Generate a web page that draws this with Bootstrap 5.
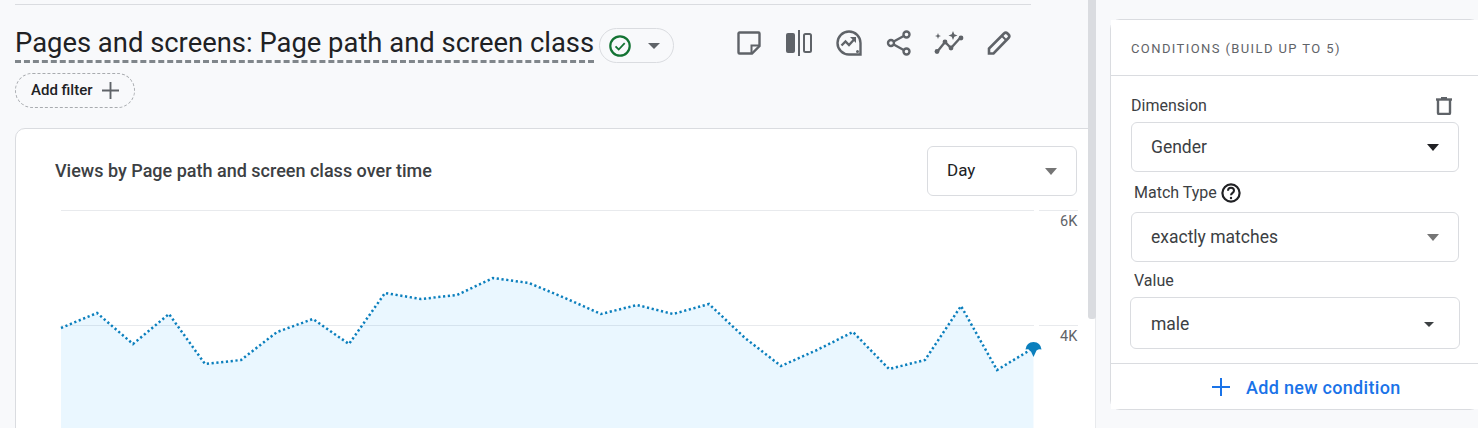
<!DOCTYPE html>
<html lang="en">
<head>
<meta charset="utf-8">
<title>Pages and screens</title>
<link href="https://cdn.jsdelivr.net/npm/bootstrap@5.3.0/dist/css/bootstrap.min.css" rel="stylesheet">
<style>
html,body{height:100%;margin:0;overflow:hidden;background:#f8f9fb;font-family:Roboto,"Liberation Sans",sans-serif;color:#3c4043}
.shell{width:1478px;height:428px;overflow:hidden}
.main-pane{width:1088px;flex:none;overflow:hidden;padding:4px 0 0 15px}
.top-rule{width:1016px;height:1px;background:#dadce0}
.title-row{height:58px;padding-top:18px}
.page-title{font-family:Roboto,sans-serif;font-size:27.4px;font-weight:400;line-height:40px;height:40px;margin:0;color:#202124;border-bottom:3px dashed #80868b;white-space:nowrap}
.status-pill{width:75px;height:35px;margin:5px 0 0 5px;border:1px solid #dadce0;border-radius:18px;padding-left:10px;gap:17px}
.status-pill svg{margin-left:-1px}
.tool-row{margin:-5px 0 0 50px}
.tool-btn{width:50px;height:50px}
.icon{fill:none;stroke:#5f6368;stroke-width:2}
.filter-pill{width:120px;height:35px;margin-top:10px;border:1px dashed #a8abaf;border-radius:18px;padding-left:15px;gap:9px;font-size:15px;font-weight:500;color:#202124}
.chart-card{width:1090px;height:340px;margin-top:20px;border:1px solid #dadce0;border-radius:10px 0 0 0;background:#fff;overflow:hidden}
.chart-head{height:67px;padding:17px 27px 0 39px}
.chart-title{font-size:18px;font-weight:500;color:#3c4043;line-height:20px;padding-top:15px}
.picker{background:#fff;border:1px solid #dadce0;border-radius:6px;font-size:17.5px;color:#3c4043;padding:0 19px}
.picker-day{width:150px;height:50px;color:#202124;font-size:17px}
.caret{width:0;height:0;border-style:solid;border-color:#757575 transparent transparent;border-width:7px 6.5px 0}
.caret-dark{border-top-color:#202124}
.caret-small{border-width:5px 5.5px 0;border-top-color:#3c4043}
.status-pill .caret-small{border-width:6px 6px 0;border-top-color:#5f6368}
.chart-svg{display:block}
.scroll-track{width:8px;flex:none;background:#fff;border-right:1px solid #e8eaed}
.scroll-thumb{height:319px;width:8px;background:#dadce0;border-radius:0 0 3px 3px}
.side-pane{flex:1;min-width:0;overflow:hidden;padding:19px 0 0 14px}
.cond-card{width:370px;height:391px;border:1px solid #dadce0;border-radius:10px;background:#fff;--bs-card-cap-bg:#fff;--bs-card-border-color:#dadce0}
.cond-head{height:56px;padding:0 20px;font-size:13px;letter-spacing:1.4px;color:#5f6368;line-height:57px;background:#fff;border-bottom:1px solid #dadce0}
.cond-body{padding:19px 0 0 20px}
.cond-row{width:328px;height:22px;margin-bottom:5px;font-size:16px;padding-right:7px}
.cond-label{font-size:16px;line-height:20px;color:#3c4043;margin-left:3px;padding-top:1px;margin-bottom:-1px}
.label-match{margin-top:10px}
.picker-cond{width:328px;height:50px}
.picker-gap{margin:10px 0 8px}
.picker-value{width:330px;height:52px;margin:7px 0 0 -1px;padding:2px 25px 0 20px}
.cond-foot{height:46px;background:#fff;border-top:1px solid #dadce0;padding:1px 0 0 101px;gap:16px;color:#1a73e8;font-size:18px;font-weight:500;letter-spacing:.3px}
.chart-text{font-family:Roboto,sans-serif;font-size:14.5px;fill:#5f6368}
</style>
</head>
<body>
<div class="shell d-flex">
  <main class="main-pane">
    <div class="top-rule"></div>
    <div class="title-row d-flex align-items-start">
      <h1 class="page-title">Pages and screens: Page path and screen class</h1>
      <div class="status-pill d-flex align-items-center">
        <svg width="22" height="22" viewBox="0 0 22 22" fill="none" stroke="#137333"><circle cx="11" cy="11" r="9.700" stroke-width="2.200"/><path d="M6.500 11.300l3.200 3.200 6-6.400" stroke-width="1.800"/></svg>
        <span class="caret caret-small"></span>
      </div>
      <div class="tool-row d-flex">
        <div class="tool-btn d-flex align-items-center justify-content-center">
          <svg class="icon" width="24" height="24" viewBox="0 0 24 24"><path d="M1.500 2.500a1 1 0 0 1 1-1h19a1 1 0 0 1 1 1V15l-7.500 7.500H2.500a1 1 0 0 1-1-1z" stroke-width="2.400"/><path d="M22 14.500h-7.500V22" stroke-width="2"/></svg>
        </div>
        <div class="tool-btn d-flex align-items-center justify-content-center">
          <svg width="26" height="26" viewBox="0 0 26 26"><rect x="0" y="3" width="9" height="20" rx="2" fill="#5f6368"/><rect x="12" y="0" width="2" height="26" fill="#5f6368"/><rect x="18" y="4" width="7" height="18" rx="1.500" fill="none" stroke="#5f6368" stroke-width="2"/></svg>
        </div>
        <div class="tool-btn d-flex align-items-center justify-content-center">
          <svg class="icon" width="26" height="26" viewBox="0 0 26 26"><path d="M13 1.500a11.500 11.500 0 0 1 11.500 11.500v11.500H13A11.500 11.500 0 0 1 13 1.500z" stroke-width="2.400"/><path d="M5.500 15.500l4-4 3.500 3.500 5.500-6" stroke-width="2.400"/><path d="M14 7h6v6z" fill="#5f6368" stroke="none"/><circle cx="21.500" cy="21.500" r="1.500" fill="#5f6368" stroke="none"/></svg>
        </div>
        <div class="tool-btn d-flex align-items-center justify-content-center">
          <svg class="icon" width="26" height="26" viewBox="0 0 26 26"><circle cx="20.500" cy="4.500" r="3" stroke-width="2.400"/><circle cx="5" cy="13" r="3" stroke-width="2.400"/><circle cx="20.500" cy="21.500" r="3" stroke-width="2.400"/><path d="M7.700 11.500l10-5.500M7.700 14.500l10 5.500" stroke-width="2.400"/></svg>
        </div>
        <div class="tool-btn d-flex align-items-center justify-content-center">
          <svg width="30" height="24" viewBox="0 0 30 24"><path d="M3 21l8-10 6 6 10-11" fill="none" stroke="#5f6368" stroke-width="2.400"/><g fill="#5f6368"><circle cx="3" cy="20.500" r="2.400"/><circle cx="11" cy="11" r="2.400"/><circle cx="17" cy="17" r="2.400"/><circle cx="27" cy="7" r="2.400"/><path d="M19 0l1.300 3.200L23.500 4.500l-3.200 1.300L19 9l-1.300-3.200L14.500 4.500l3.200-1.300z"/><path d="M4 2l.8 2.200L7 5l-2.200.8L4 8l-.8-2.200L1 5l2.200-.8z"/></g></svg>
        </div>
        <div class="tool-btn d-flex align-items-center justify-content-center">
          <svg class="icon" width="24" height="24" viewBox="0 0 24 24"><path d="M2 22.500v-5L17 2.500a2.500 2.500 0 0 1 3.500 0l1 1a2.500 2.500 0 0 1 0 3.500L6.500 22.500z" stroke-width="2.600"/><path d="M15 5l4.500 4.500" stroke-width="2"/></svg>
        </div>
      </div>
    </div>
    <div class="filter-pill d-flex align-items-center">
      <span>Add filter</span>
      <svg width="17" height="17" viewBox="0 0 18 18"><path d="M9 0v18M0 9h18" stroke="#5f6368" stroke-width="2"/></svg>
    </div>
    <section class="chart-card">
      <div class="chart-head d-flex justify-content-between align-items-start">
        <div class="chart-title">Views by Page path and screen class over time</div>
        <div class="picker picker-day d-flex justify-content-between align-items-center">
          <span>Day</span><span class="caret"></span>
        </div>
      </div>
      <svg class="chart-svg" width="1088" height="232" viewBox="16 196 1088 232">
        <path d="M61 210.500H1034M1039 210.500H1078M61 325.500H1034M1039 325.500H1078" stroke="#e8eaed" stroke-width="1" fill="none"/>
        <polygon fill="#19a8ff" fill-opacity=".09" points="61,328 97,313 133,344 169,314 205,364 241,360 277,332 313,319 349,344 385,293 421,299 457,295 493,278 529,283 565,298 601,314 637,305 673,314 709,304 745,338 781,366 817,350 853,332 889,369 925,360 961,306 997,370 1033.500,348 1033.500,428 61,428"/>
        <polyline fill="none" stroke="#0b7fbd" stroke-width="2.500" stroke-dasharray="2.200 2.600" points="61,328 97,313 133,344 169,314 205,364 241,360 277,332 313,319 349,344 385,293 421,299 457,295 493,278 529,283 565,298 601,314 637,305 673,314 709,304 745,338 781,366 817,350 853,332 889,369 925,360 961,306 997,370 1033.500,348"/>
        <path d="M1033.500 357L1030.500 350.500Q1028 348.500 1025.500 349.500Q1026.500 342 1033.500 342Q1040.500 342 1041.500 349.500Q1039 348.500 1036.500 350.500z" fill="#0b7fbd"/>
        <text class="chart-text" x="1060" y="226">6K</text><text class="chart-text" x="1060" y="341">4K</text>
      </svg>
    </section>
  </main>
  <div class="scroll-track"><div class="scroll-thumb"></div></div>
  <aside class="side-pane">
    <div class="card cond-card">
      <div class="cond-head">CONDITIONS (BUILD UP TO 5)</div>
      <div class="cond-body flex-grow-1">
        <div class="cond-row d-flex justify-content-between align-items-center">
          <span>Dimension</span>
          <svg width="16" height="18" viewBox="0 0 16 18" fill="none" stroke="#5f6368" stroke-width="2.400"><path d="M0 2.500h16"/><path d="M5 1.200h6"/><path d="M2 3v13a1 1 0 0 0 1 1h10a1 1 0 0 0 1-1V3"/></svg>
        </div>
        <div class="picker picker-cond d-flex justify-content-between align-items-center">
          <span>Gender</span><span class="caret caret-dark"></span>
        </div>
        <div class="cond-label label-match d-flex align-items-center gap-1">
          <span>Match Type</span>
          <svg width="20" height="20" viewBox="0 0 20 20" fill="none" stroke="#202124"><circle cx="10" cy="10" r="8.600" stroke-width="2.200"/><path d="M7 7.800a3 3 0 0 1 6 0c0 2-3 2.200-3 4.500" stroke-width="2"/><circle cx="10" cy="15" r="1.200" fill="#202124" stroke="none"/></svg>
        </div>
        <div class="picker picker-cond picker-gap d-flex justify-content-between align-items-center">
          <span>exactly matches</span><span class="caret"></span>
        </div>
        <div class="cond-label">Value</div>
        <div class="picker picker-value d-flex justify-content-between align-items-center">
          <span>male</span><span class="caret caret-small"></span>
        </div>
      </div>
      <div class="cond-foot d-flex align-items-center">
        <svg width="18" height="18" viewBox="0 0 18 18"><path d="M9 0v18M0 9h18" stroke="#1a73e8" stroke-width="2"/></svg>
        <span>Add new condition</span>
      </div>
    </div>
  </aside>
</div>
<script src="https://cdn.jsdelivr.net/npm/bootstrap@5.3.0/dist/js/bootstrap.bundle.min.js"></script>
</body>
</html>
